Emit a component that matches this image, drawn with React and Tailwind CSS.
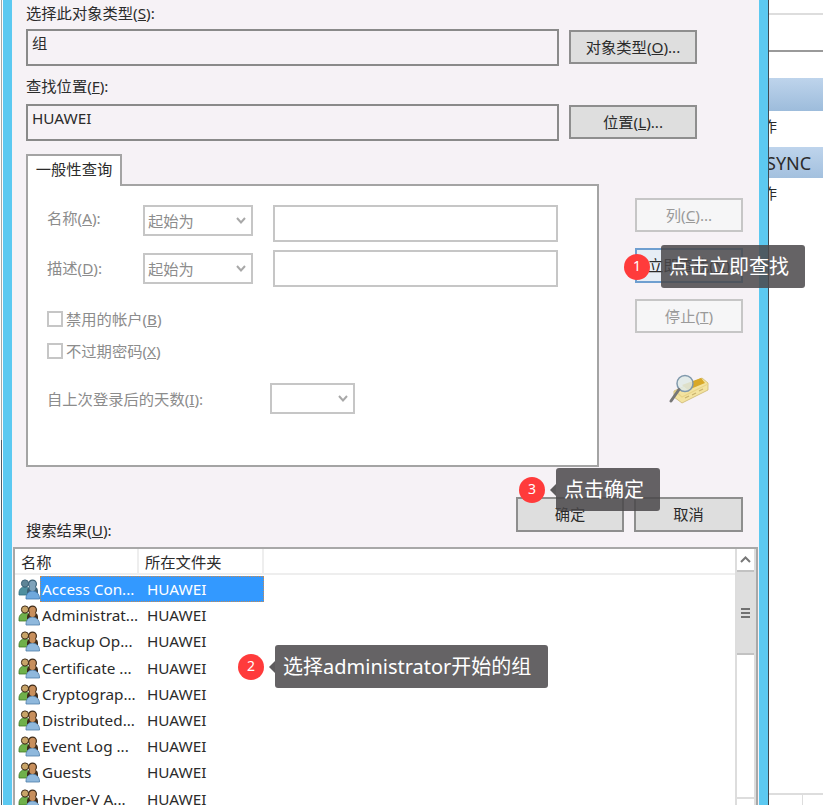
const font = { fontFamily: '"Noto Sans", "Noto Sans CJK SC", sans-serif' };

function GroupIcon({ selected }) {
  const c = selected
    ? { g: '#4f8f9f', gd: '#2f6f80', h: '#5f8597', hd: '#3d6277', b: '#6fa8dc', bd: '#3f78b0', s: '#7fa3bb' }
    : { g: '#6fb04a', gd: '#3f7a2a', h: '#c8a468', hd: '#3f2c1a', b: '#8fb8dc', bd: '#4f7ea8', s: '#c88f5c' };
  return (
    <svg width="22" height="22" viewBox="0 0 22 22" className="shrink-0">
      <path d="M1 15c0-4 2.5-6 6-6s6 2 6 6v2H1z" fill={c.g} stroke={c.gd} strokeWidth="0.8" />
      <circle cx="7" cy="5.5" r="3.6" fill={c.h} stroke={c.hd} strokeWidth="1" />
      <path d="M9 13c0-3 2.5-5 5.5-5S20 10 20 13v2H9z" fill={c.hd} />
      <circle cx="14.5" cy="6" r="3.9" fill={c.s} stroke={c.hd} strokeWidth="1.2" />
      <path d="M8 20c0-4 3-7 6.5-7s7 3 7 7v1H8z" fill={c.b} stroke={c.bd} strokeWidth="0.8" />
      <circle cx="14.5" cy="10" r="3" fill={c.s} />
    </svg>
  );
}

function FindIcon() {
  return (
    <svg width="42" height="32" viewBox="0 0 42 32">
      <path d="M6 17 L34 4 L40 9 L40 16 L14 29 L6 23Z" fill="#f3e3a0" stroke="#cdb76e" strokeWidth="0.8" />
      <path d="M14 11 L33 4 L37 9 L20 16Z" fill="#d8a828" />
      <path d="M7 17 L14 23 L40 10" fill="none" stroke="#e8d488" strokeWidth="1.2" />
      <path d="M17 24 l4 -2 M24 21 l4 -2 M31 17 l4 -2" stroke="#c9b26c" strokeWidth="1.2" />
      <circle cx="17" cy="9.5" r="8" fill="#dfeae6" fillOpacity="0.85" stroke="#8099ac" strokeWidth="1.5" />
      <path d="M11 15.5 L3 27" stroke="#777" strokeWidth="3" strokeLinecap="round" />
    </svg>
  );
}

function Chevron({ color = '#a8a8a8' }) {
  return (
    <svg width="10" height="7" viewBox="0 0 10 7" className="shrink-0">
      <path d="M1 1 L5 5.5 L9 1" fill="none" stroke={color} strokeWidth="2" />
    </svg>
  );
}

function Select({ className, text }) {
  return (
    <div className={`flex items-center justify-between border-2 border-[#c6c6c6] bg-white pl-[3px] pr-[5px] text-[#8c8c8c] ${className}`}>
      <span>{text}</span>
      <Chevron />
    </div>
  );
}

function Btn({ children, disabled, className = '' }) {
  const skin = disabled
    ? 'border-[#c6c6c6] bg-[#f6f6f7] text-[#9a9a9a]'
    : 'border-[#8e8e8e] bg-[#dedede] text-[#2b2b2b]';
  return (
    <div className={`flex h-[34px] shrink-0 items-center justify-center border-2 pb-px ${skin} ${className}`}>{children}</div>
  );
}

function Callout({ n, text, className, arrow = true, tipClass }) {
  return (
    <div className={`absolute flex items-center ${className}`}>
      <div className="flex h-[26px] w-[26px] items-center justify-center rounded-full bg-[#ff3b3b] pb-[2px] text-[14px] text-white">{n}</div>
      <div className={`ml-[5px] h-0 w-0 border-y-[6px] border-r-[6px] border-y-transparent ${arrow ? 'border-r-[#5d5b5d]' : 'border-r-transparent'}`} />
      <div className={`flex h-[43px] items-center whitespace-nowrap rounded-[3px] bg-[#4a484a]/85 px-[8px] text-[20px] text-white ${tipClass}`}>{text}</div>
    </div>
  );
}

const rows = ['Access Con...', 'Administrat...', 'Backup Op...', 'Certificate ...', 'Cryptograp...', 'Distributed...', 'Event Log ...', 'Guests', 'Hyper-V A...'];

export default function App() {
  return (
    <div style={font} className="flex h-[805px] w-[823px] overflow-hidden bg-white text-[15.3px] leading-[20px] text-[#2b2b2b]">
      <div className="flex h-full w-[3px] flex-col pl-px">
        <div className="h-[440px] w-[1px] bg-[#a8a8a8]" />
        <div className="w-[1px] flex-1 bg-[#555c66]" />
      </div>
      <div className="h-full w-[9px] shrink-0 bg-[#5cc9f1]" />

      <div className="relative z-10 flex h-full w-[747px] shrink-0 flex-col bg-[#f6f2f6] pt-[3px]">
        <div className="ml-[14px] h-[20px]">选择此对象类型(<u>S</u>):</div>
        <div className="ml-[14px] mt-[6px] flex items-start gap-[10px]">
          <div className="h-[37px] w-[533px] border-2 border-[#8a8a8a] px-[4px] pt-[2px]">组</div>
          <Btn className="mt-px w-[128px]">对象类型(<u>O</u>)...</Btn>
        </div>
        <div className="ml-[14px] mt-[10px] h-[20px]">查找位置(<u>F</u>):</div>
        <div className="ml-[14px] mt-[8px] flex items-start gap-[10px]">
          <div className="h-[37px] w-[533px] border-2 border-[#8a8a8a] px-[4px] pt-[2px]">HUAWEI</div>
          <Btn className="mt-px w-[128px]">位置(<u>L</u>)...</Btn>
        </div>

        <div className="ml-[14px] mt-[13px] flex items-start">
          <div className="w-[573px]">
            <div className="relative z-10 -mb-[2px] flex h-[32px] w-[96px] items-center justify-center border-2 border-b-0 border-[#a4a4a4] bg-white pb-[5px]">一般性查询</div>
            <div className="h-[283px] border-2 border-[#a4a4a4] bg-white pl-[19px] pt-[19px] text-[#8c8c8c]">
              <div className="flex items-start">
                <div className="w-[96px] pt-[3px]">名称(<u>A</u>):</div>
                <Select className="h-[31px] w-[110px]" text="起始为" />
                <div className="ml-[20px] h-[37px] w-[285px] border-2 border-[#c6c6c6]" />
              </div>
              <div className="mt-[8px] flex items-start">
                <div className="w-[96px] pt-[8px]">描述(<u>D</u>):</div>
                <Select className="mt-[3px] h-[31px] w-[110px]" text="起始为" />
                <div className="ml-[20px] h-[37px] w-[285px] border-2 border-[#c6c6c6]" />
              </div>
              <div className="mt-[23px] flex h-[17px] items-center gap-[3px]">
                <div className="h-[16px] w-[16px] border-2 border-[#c6c6c6]" />
                <span>禁用的帐户(<u>B</u>)</span>
              </div>
              <div className="mt-[15px] flex h-[17px] items-center gap-[3px]">
                <div className="h-[16px] w-[16px] border-2 border-[#c6c6c6]" />
                <span>不过期密码(<u>X</u>)</span>
              </div>
              <div className="mt-[24px] flex items-center">
                <div className="w-[223px]">自上次登录后的天数(<u>I</u>):</div>
                <Select className="h-[31px] w-[85px]" text="" />
              </div>
            </div>
          </div>
          <div className="ml-[36px] flex w-[108px] flex-col pt-[44px]">
            <Btn disabled>列(<u>C</u>)...</Btn>
            <Btn className="mt-[16px] !h-[35px] !border-[#6f9fd0] !bg-[#e6edf5]">立即查找(<u>N</u>)</Btn>
            <Btn disabled className="mt-[16px]">停止(<u>T</u>)</Btn>
            <div className="mt-[41px] flex justify-center"><FindIcon /></div>
          </div>
        </div>

        <div className="ml-[14px] mt-[30px] flex h-[44px] w-[717px] items-start">
          <div className="mt-auto h-[21px] flex-1">搜索结果(<u>U</u>):</div>
          <Btn className="!h-[35px] w-[108px]">确定</Btn>
          <Btn className="ml-[10px] !h-[35px] w-[109px]">取消</Btn>
        </div>

        <div className="ml-[1px] mt-[6px] flex h-[258px] w-[745px] shrink-0 overflow-hidden border-2 border-b-0 border-[#a8a8a8] bg-white">
          <div className="min-w-0 flex-1">
            <div className="flex h-[26px] border-b-2 border-[#eeeeee] leading-[26px]">
              <div className="w-[124px] border-r-2 border-[#eeeeee] pl-[6px]">名称</div>
              <div className="w-[125px] border-r-2 border-[#eeeeee] pl-[6px]">所在文件夹</div>
            </div>
            <div className="pl-[3px] pt-[1px]">
              {rows.map((r, i) => (
                <div key={r} className="flex h-[26.2px] items-center">
                  <GroupIcon selected={i === 0} />
                  <div className={`flex h-[26px] w-[224px] items-center pl-[2px] ${i === 0 ? 'bg-[#3399ff] text-white outline-1 -outline-offset-1 outline-dotted outline-[#c88a50]' : ''}`}>
                    <span className="w-[105px] whitespace-nowrap">{r}</span>
                    <span>HUAWEI</span>
                  </div>
                </div>
              ))}
            </div>
          </div>
          <div className="flex h-full w-[21px] shrink-0 flex-col border-x-2 border-[#dddddd] bg-white">
            <div className="flex h-[21px] shrink-0 items-center justify-center">
              <svg width="11" height="7" viewBox="0 0 11 7"><path d="M1 6 L5.5 1.5 L10 6" fill="none" stroke="#777" strokeWidth="2" /></svg>
            </div>
            <div className="flex h-[85px] shrink-0 flex-col items-center justify-center gap-[2px] border-y-2 border-[#c2c2c2] bg-[#dedede]">
              <div className="h-[2px] w-[9px] bg-[#707070]" />
              <div className="h-[2px] w-[9px] bg-[#707070]" />
              <div className="h-[2px] w-[9px] bg-[#707070]" />
            </div>
            <div className="flex-1" />
            <div className="h-[8px] border-t-2 border-[#dddddd]" />
          </div>
        </div>

        <Callout n="1" text="点击立即查找" arrow={false} className="left-[612px] top-[245px]" tipClass="w-[144px]" />
        <Callout n="3" text="点击确定" className="left-[507px] top-[468px]" tipClass="w-[104px]" />
        <Callout n="2" text="选择administrator开始的组" className="left-[226px] top-[645px]" tipClass="w-[273px]" />
      </div>

      <div className="h-full w-[9px] shrink-0 bg-[#5cc9f1]" />
      <div className="h-full w-px shrink-0 bg-[#3f4a52]" />

      <div className="flex h-full min-w-0 flex-1 flex-col overflow-hidden whitespace-nowrap bg-white text-[18px]">
        <div className="h-[13px] shrink-0" />
        <div className="h-[2px] shrink-0 bg-[#dddddd]" />
        <div className="h-[35px] shrink-0" />
        <div className="h-[2px] shrink-0 bg-[#9a9a9a]" />
        <div className="h-[26px] shrink-0" />
        <div className="h-[33px] shrink-0 bg-gradient-to-b from-[#bed4ec] to-[#9dbcdb]" />
        <div className="-ml-[22px] flex h-[36px] shrink-0 items-center pb-[6px] text-[15px]">操作</div>
        <div className="-ml-[3px] flex h-[31px] shrink-0 items-center bg-gradient-to-b from-[#bed4ec] to-[#a3c0de]">SYNC</div>
        <div className="-ml-[22px] flex h-[29px] shrink-0 items-center text-[15px]">操作</div>
        <div className="flex-1" />
        <div className="h-[2px] shrink-0 bg-[#dddddd]" />
        <div className="h-[10px] w-[34px] shrink-0 border-r border-[#dddddd]" />
      </div>
    </div>
  );
}
